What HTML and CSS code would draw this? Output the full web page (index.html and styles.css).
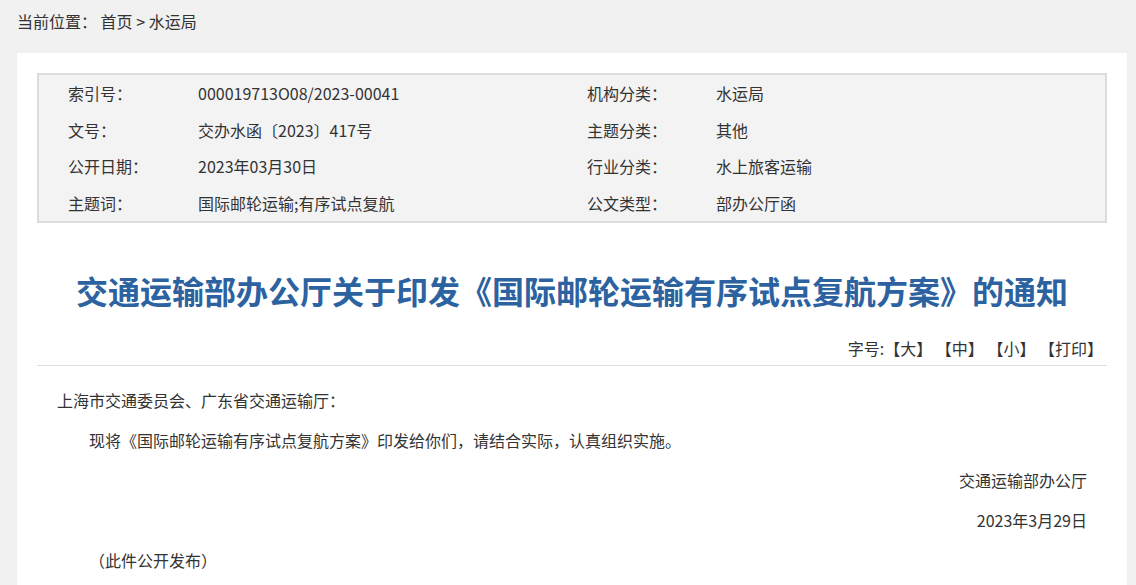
FILE: index.html
```html
<!DOCTYPE html>
<html lang="zh-CN">
<head>
    <meta charset="UTF-8">
    <meta name="viewport" content="width=device-width, initial-scale=1.0">
    <title>交通运输部办公厅关于印发《国际邮轮运输有序试点复航方案》的通知</title>
    <link rel="stylesheet" href="styles.css">
</head>
<body>
    <div class="crumb">当前位置： <a href="#">首页</a> &gt; <a href="#">水运局</a></div>

    <div class="panel">
        <div class="info-table">
            <div class="label">索引号：</div>
            <div class="value">000019713O08/2023-00041</div>
            <div class="label">机构分类：</div>
            <div class="value">水运局</div>

            <div class="label">文号：</div>
            <div class="value">交办水函〔2023〕417号</div>
            <div class="label">主题分类：</div>
            <div class="value">其他</div>

            <div class="label">公开日期：</div>
            <div class="value">2023年03月30日</div>
            <div class="label">行业分类：</div>
            <div class="value">水上旅客运输</div>

            <div class="label">主题词：</div>
            <div class="value">国际邮轮运输;有序试点复航</div>
            <div class="label">公文类型：</div>
            <div class="value">部办公厅函</div>
        </div>

        <h1 class="title">交通运输部办公厅关于印发《国际邮轮运输有序试点复航方案》的通知</h1>

        <div class="tools">
            字号:<a href="#">【大】</a> <a href="#">【中】</a> <a href="#">【小】</a> <a href="#">【打印】</a>
        </div>

        <div class="content">
            <p>上海市交通委员会、广东省交通运输厅：</p>
            <p class="indent">现将《国际邮轮运输有序试点复航方案》印发给你们，请结合实际，认真组织实施。</p>
            <p class="right">交通运输部办公厅</p>
            <p class="right">2023年3月29日</p>
            <p class="indent">（此件公开发布）</p>
        </div>
    </div>
</body>
</html>
```

FILE: styles.css
```css
body {
    margin: 0;
    background-color: #f1f1f1;
    font-family: "Microsoft YaHei", "Noto Sans CJK SC", sans-serif;
    font-size: 16px;
    color: #333;
}

a {
    color: #333;
    text-decoration: none;
}

.crumb {
    height: 53px;
    line-height: 42px;
    padding-left: 17px;
}

.panel {
    background-color: white;
    margin: 0 9px 0 17px;
    padding: 20px 20px 40px;
    min-height: 600px;
}

.info-table {
    display: grid;
    grid-template-columns: 130px 389px 129px 1fr;
    grid-auto-rows: 36.5px;
    align-items: center;
    padding-left: 29px;
    background-color: #f3f3f3;
    border: 2px solid #dddddd;
}

.title {
    margin: 47px 0 0;
    text-align: center;
    font-size: 32px;
    line-height: 40px;
    font-weight: bold;
    color: #2c62a0;
}

.tools {
    margin-top: 26px;
    padding: 0 4px 5px 0;
    text-align: right;
    line-height: 24px;
    border-bottom: 1px solid #dddddd;
}

.content {
    padding: 14px 20px 0;
}

.content p {
    margin: 0;
    line-height: 40px;
}

.content .indent {
    text-indent: 2em;
}

.content .right {
    text-align: right;
}
```
